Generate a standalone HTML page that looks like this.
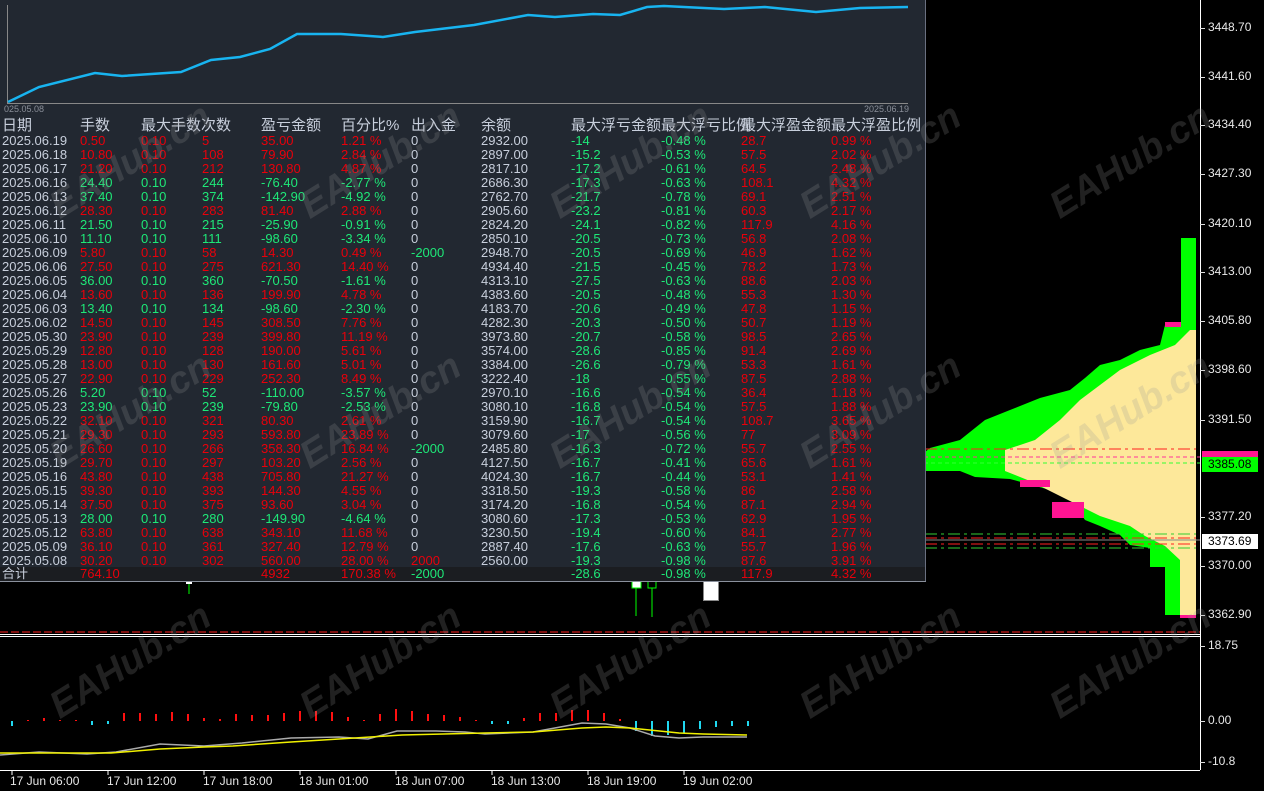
<!DOCTYPE html>
<html><head><meta charset="utf-8"><style>
*{margin:0;padding:0}
body{width:1264px;height:791px;background:#000;position:relative;overflow:hidden;font-family:"Liberation Sans","Noto Sans CJK SC",sans-serif}
.abs{position:absolute}
#panel{position:absolute;left:0;top:0;width:925px;height:581px;background:#222831;border-right:1px solid #6a7080}
.r{position:absolute;left:0;width:925px;height:14px;font-size:13px;line-height:14px}
.r span{position:absolute;top:0;white-space:nowrap}
.a{left:2px;color:#c8cfdc}.b{left:80px}.c{left:141px}.d{left:202px}.e{left:261px}.f{left:341px}.g{left:411px;color:#c8cfdc}.h{left:481px;color:#c8cfdc}.i{left:571px;color:#1ee878}.j{left:661px;color:#1ee878}.k{left:741px;color:#e8000b}.l{left:831px;color:#e8000b}
.R{color:#e8000b}.G{color:#1ee878}
.R .a,.G .a{color:#c8cfdc}
.gg{color:#1ee878!important}
#hdr{position:absolute;top:116px;left:0;font-size:15px;line-height:20px;color:#c8cfdc;width:925px;height:20px}
#hdr span{position:absolute;white-space:nowrap}
.ax{position:absolute;left:1208px;font-size:12px;color:#e8e8e8;font-family:"Liberation Sans",sans-serif}
.tk{position:absolute;left:1200px;width:5px;height:1px;background:#ddd}
.tl{position:absolute;top:774px;font-size:12px;color:#e8e8e8}
.wm{position:absolute;font:bold italic 38px "Liberation Sans",sans-serif;color:rgba(150,150,150,0.22);transform:rotate(-32deg);white-space:nowrap}
</style></head><body>

<!-- volume profile -->
<svg class="abs" style="left:0;top:0" width="1264" height="791">
<polygon fill="#00ff00" points="1181,238 1196,238 1196,615 1165,615 1165,567 1150,567 1150,548 1130,545 1120,535 1100,526 1085,520 1070,497 1050,490 1010,479 975,477 960,471 925,471 925,452 930,448 960,440 985,420 1010,410 1040,398 1070,390 1085,378 1100,365 1120,360 1140,350 1160,345 1165,325 1181,322"/>
<polygon fill="#fde89a" points="1190,330 1196,330 1196,615 1180,615 1180,560 1165,546 1145,536 1130,526 1100,516 1070,501 1050,491 1030,481 1005,471 1005,450 1035,440 1060,420 1080,400 1100,385 1120,370 1150,355 1175,345"/>
<rect x="1165" y="322" width="16" height="5" fill="#ff1493"/>
<rect x="1020" y="480" width="30" height="7" fill="#ff1493"/>
<rect x="1052" y="502" width="32" height="16" fill="#ff1493"/>
<rect x="1180" y="615" width="16" height="3" fill="#ff1493"/>
<line x1="925" y1="449" x2="1196" y2="449" stroke="#ff2020" stroke-dasharray="12,4,3,4"/>
<line x1="0" y1="457" x2="1200" y2="457" stroke="#ff3399" stroke-dasharray="4,3"/>
<line x1="0" y1="463" x2="1200" y2="463" stroke="#33ff33" stroke-dasharray="4,3"/>
<line x1="925" y1="534" x2="1196" y2="534" stroke="#33cc33" stroke-dasharray="12,4,3,4"/>
<line x1="925" y1="538" x2="1196" y2="538" stroke="#ff2020" stroke-dasharray="12,4,3,4"/>
<line x1="925" y1="540" x2="1200" y2="540" stroke="#888"/>
<line x1="925" y1="544" x2="1196" y2="544" stroke="#ff2020" stroke-dasharray="12,4,3,4"/>
<line x1="925" y1="548" x2="1196" y2="548" stroke="#33cc33" stroke-dasharray="12,4,3,4"/>
<line x1="0" y1="632" x2="1200" y2="632" stroke="#ff2020" stroke-dasharray="8,3"/>
<line x1="0" y1="634.5" x2="1200" y2="634.5" stroke="#fff"/>
<line x1="0" y1="636.5" x2="1200" y2="636.5" stroke="#fff"/>
<line x1="1200.5" y1="0" x2="1200.5" y2="770" stroke="#fff"/>
<line x1="0" y1="770.5" x2="1200" y2="770.5" stroke="#fff"/>
<!-- candles -->
<line x1="189" y1="582" x2="189" y2="594" stroke="#00ff00"/><rect x="186" y="582" width="6" height="2" fill="#fff"/>
<line x1="636" y1="588" x2="636" y2="616" stroke="#00ff00"/><rect x="632" y="581" width="9" height="7" fill="#fff" stroke="#00ff00"/>
<line x1="652" y1="588" x2="652" y2="617" stroke="#00ff00"/><rect x="648" y="581" width="8" height="7" fill="none" stroke="#00ff00"/>
<rect x="703.5" y="578.5" width="15" height="22" fill="#fff" stroke="#888"/>
<!-- indicator -->
<g stroke-width="2">
<line x1="12" y1="721" x2="12" y2="726" stroke="#20d8f0"/>
<line x1="28" y1="721" x2="28" y2="720" stroke="#ff1010"/>
<line x1="44" y1="721" x2="44" y2="718" stroke="#ff1010"/>
<line x1="60" y1="721" x2="60" y2="720" stroke="#ff1010"/>
<line x1="76" y1="721" x2="76" y2="720" stroke="#ff1010"/>
<line x1="92" y1="721" x2="92" y2="725" stroke="#20d8f0"/>
<line x1="108" y1="721" x2="108" y2="724" stroke="#20d8f0"/>
<line x1="124" y1="721" x2="124" y2="713" stroke="#ff1010"/>
<line x1="140" y1="721" x2="140" y2="713" stroke="#ff1010"/>
<line x1="156" y1="721" x2="156" y2="714" stroke="#ff1010"/>
<line x1="172" y1="721" x2="172" y2="712" stroke="#ff1010"/>
<line x1="188" y1="721" x2="188" y2="714" stroke="#ff1010"/>
<line x1="204" y1="721" x2="204" y2="718" stroke="#ff1010"/>
<line x1="220" y1="721" x2="220" y2="719" stroke="#ff1010"/>
<line x1="236" y1="721" x2="236" y2="714" stroke="#ff1010"/>
<line x1="252" y1="721" x2="252" y2="715" stroke="#ff1010"/>
<line x1="268" y1="721" x2="268" y2="715" stroke="#ff1010"/>
<line x1="284" y1="721" x2="284" y2="713" stroke="#ff1010"/>
<line x1="300" y1="721" x2="300" y2="711" stroke="#ff1010"/>
<line x1="316" y1="721" x2="316" y2="711" stroke="#ff1010"/>
<line x1="332" y1="721" x2="332" y2="712" stroke="#ff1010"/>
<line x1="348" y1="721" x2="348" y2="717" stroke="#ff1010"/>
<line x1="364" y1="721" x2="364" y2="720" stroke="#ff1010"/>
<line x1="380" y1="721" x2="380" y2="714" stroke="#ff1010"/>
<line x1="396" y1="721" x2="396" y2="709" stroke="#ff1010"/>
<line x1="412" y1="721" x2="412" y2="711" stroke="#ff1010"/>
<line x1="428" y1="721" x2="428" y2="714" stroke="#ff1010"/>
<line x1="444" y1="721" x2="444" y2="715" stroke="#ff1010"/>
<line x1="460" y1="721" x2="460" y2="717" stroke="#ff1010"/>
<line x1="476" y1="721" x2="476" y2="720" stroke="#ff1010"/>
<line x1="492" y1="721" x2="492" y2="724" stroke="#20d8f0"/>
<line x1="508" y1="721" x2="508" y2="724" stroke="#20d8f0"/>
<line x1="524" y1="721" x2="524" y2="718" stroke="#ff1010"/>
<line x1="540" y1="721" x2="540" y2="713" stroke="#ff1010"/>
<line x1="556" y1="721" x2="556" y2="713" stroke="#ff1010"/>
<line x1="572" y1="721" x2="572" y2="710" stroke="#ff1010"/>
<line x1="588" y1="721" x2="588" y2="710" stroke="#ff1010"/>
<line x1="604" y1="721" x2="604" y2="713" stroke="#ff1010"/>
<line x1="620" y1="721" x2="620" y2="719" stroke="#ff1010"/>
<line x1="636" y1="721" x2="636" y2="731" stroke="#20d8f0"/>
<line x1="652" y1="721" x2="652" y2="736" stroke="#20d8f0"/>
<line x1="668" y1="721" x2="668" y2="735" stroke="#20d8f0"/>
<line x1="684" y1="721" x2="684" y2="733" stroke="#20d8f0"/>
<line x1="700" y1="721" x2="700" y2="729" stroke="#20d8f0"/>
<line x1="716" y1="721" x2="716" y2="727" stroke="#20d8f0"/>
<line x1="732" y1="721" x2="732" y2="726" stroke="#20d8f0"/>
<line x1="748" y1="721" x2="748" y2="726" stroke="#20d8f0"/>
</g>
<polyline fill="none" stroke="#aaa" stroke-width="1.5" points="0,755 39,752 87,754 116,752 160,744 204,746 242,743 291,738 339,737 368,739 397,731 436,731 465,732 485,734 533,732 582,723 606,724 630,728 655,736 679,738 703,737 747,737"/>
<polyline fill="none" stroke="#f0f000" stroke-width="1.5" points="0,753 82,753 111,753 160,749 204,747 233,746 291,742 339,739 402,735 485,733 533,732 582,728 606,727 630,728 679,733 703,734 747,735"/>
<!-- time ticks -->
<g stroke="#fff"><line x1="12" y1="770" x2="12" y2="775"/><line x1="108" y1="770" x2="108" y2="775"/><line x1="204" y1="770" x2="204" y2="775"/><line x1="300" y1="770" x2="300" y2="775"/><line x1="396" y1="770" x2="396" y2="775"/><line x1="492" y1="770" x2="492" y2="775"/><line x1="588" y1="770" x2="588" y2="775"/><line x1="684" y1="770" x2="684" y2="775"/></g>
</svg>

<div id="panel">
<svg class="abs" style="left:0;top:0" width="925" height="116">
<line x1="7.5" y1="5" x2="7.5" y2="104" stroke="#888"/>
<line x1="7" y1="103.5" x2="908" y2="103.5" stroke="#888"/>
<polyline fill="none" stroke="#18b4f0" stroke-width="2.5" points="8,102 39,87 95,73 122,76 181,72 211,60 240,57 270,49 297,34 341,34 383,37 415,32 474,25 528,15 555,17 593,14 620,15 647,7 664,6 724,9 765,7 816,12 860,8 908,7"/>
<text x="4" y="112" font-size="9" fill="#8a8f99" font-family="Liberation Sans">025.05.08</text>
<text x="864" y="112" font-size="9" fill="#8a8f99" font-family="Liberation Sans">2025.06.19</text>
</svg>
<div id="hdr"><span style="left:2px">日期</span><span style="left:80px">手数</span><span style="left:141px">最大手数次数</span><span style="left:261px">盈亏金额</span><span style="left:341px">百分比%</span><span style="left:411px">出入金</span><span style="left:481px">余额</span><span style="left:571px">最大浮亏金额</span><span style="left:661px">最大浮亏比例</span><span style="left:741px">最大浮盈金额</span><span style="left:831px">最大浮盈比例</span></div>
<div class="r R" style="top:134px"><span class="a">2025.06.19</span><span class="b">0.50</span><span class="c">0.10</span><span class="d">5</span><span class="e">35.00</span><span class="f">1.21 %</span><span class="g">0</span><span class="h">2932.00</span><span class="i">-14</span><span class="j">-0.48 %</span><span class="k">28.7</span><span class="l">0.99 %</span></div>
<div class="r R" style="top:148px"><span class="a">2025.06.18</span><span class="b">10.80</span><span class="c">0.10</span><span class="d">108</span><span class="e">79.90</span><span class="f">2.84 %</span><span class="g">0</span><span class="h">2897.00</span><span class="i">-15.2</span><span class="j">-0.53 %</span><span class="k">57.5</span><span class="l">2.02 %</span></div>
<div class="r R" style="top:162px"><span class="a">2025.06.17</span><span class="b">21.20</span><span class="c">0.10</span><span class="d">212</span><span class="e">130.80</span><span class="f">4.87 %</span><span class="g">0</span><span class="h">2817.10</span><span class="i">-17.2</span><span class="j">-0.61 %</span><span class="k">64.5</span><span class="l">2.48 %</span></div>
<div class="r G" style="top:176px"><span class="a">2025.06.16</span><span class="b">24.40</span><span class="c">0.10</span><span class="d">244</span><span class="e">-76.40</span><span class="f">-2.77 %</span><span class="g">0</span><span class="h">2686.30</span><span class="i">-17.3</span><span class="j">-0.63 %</span><span class="k">108.1</span><span class="l">4.32 %</span></div>
<div class="r G" style="top:190px"><span class="a">2025.06.13</span><span class="b">37.40</span><span class="c">0.10</span><span class="d">374</span><span class="e">-142.90</span><span class="f">-4.92 %</span><span class="g">0</span><span class="h">2762.70</span><span class="i">-21.7</span><span class="j">-0.78 %</span><span class="k">69.1</span><span class="l">2.51 %</span></div>
<div class="r R" style="top:204px"><span class="a">2025.06.12</span><span class="b">28.30</span><span class="c">0.10</span><span class="d">283</span><span class="e">81.40</span><span class="f">2.88 %</span><span class="g">0</span><span class="h">2905.60</span><span class="i">-23.2</span><span class="j">-0.81 %</span><span class="k">60.3</span><span class="l">2.17 %</span></div>
<div class="r G" style="top:218px"><span class="a">2025.06.11</span><span class="b">21.50</span><span class="c">0.10</span><span class="d">215</span><span class="e">-25.90</span><span class="f">-0.91 %</span><span class="g">0</span><span class="h">2824.20</span><span class="i">-24.1</span><span class="j">-0.82 %</span><span class="k">117.9</span><span class="l">4.16 %</span></div>
<div class="r G" style="top:232px"><span class="a">2025.06.10</span><span class="b">11.10</span><span class="c">0.10</span><span class="d">111</span><span class="e">-98.60</span><span class="f">-3.34 %</span><span class="g">0</span><span class="h">2850.10</span><span class="i">-20.5</span><span class="j">-0.73 %</span><span class="k">56.8</span><span class="l">2.08 %</span></div>
<div class="r R" style="top:246px"><span class="a">2025.06.09</span><span class="b">5.80</span><span class="c">0.10</span><span class="d">58</span><span class="e">14.30</span><span class="f">0.49 %</span><span class="g gg">-2000</span><span class="h">2948.70</span><span class="i">-20.5</span><span class="j">-0.69 %</span><span class="k">46.9</span><span class="l">1.62 %</span></div>
<div class="r R" style="top:260px"><span class="a">2025.06.06</span><span class="b">27.50</span><span class="c">0.10</span><span class="d">275</span><span class="e">621.30</span><span class="f">14.40 %</span><span class="g">0</span><span class="h">4934.40</span><span class="i">-21.5</span><span class="j">-0.45 %</span><span class="k">78.2</span><span class="l">1.73 %</span></div>
<div class="r G" style="top:274px"><span class="a">2025.06.05</span><span class="b">36.00</span><span class="c">0.10</span><span class="d">360</span><span class="e">-70.50</span><span class="f">-1.61 %</span><span class="g">0</span><span class="h">4313.10</span><span class="i">-27.5</span><span class="j">-0.63 %</span><span class="k">88.6</span><span class="l">2.03 %</span></div>
<div class="r R" style="top:288px"><span class="a">2025.06.04</span><span class="b">13.60</span><span class="c">0.10</span><span class="d">136</span><span class="e">199.90</span><span class="f">4.78 %</span><span class="g">0</span><span class="h">4383.60</span><span class="i">-20.5</span><span class="j">-0.48 %</span><span class="k">55.3</span><span class="l">1.30 %</span></div>
<div class="r G" style="top:302px"><span class="a">2025.06.03</span><span class="b">13.40</span><span class="c">0.10</span><span class="d">134</span><span class="e">-98.60</span><span class="f">-2.30 %</span><span class="g">0</span><span class="h">4183.70</span><span class="i">-20.6</span><span class="j">-0.49 %</span><span class="k">47.8</span><span class="l">1.15 %</span></div>
<div class="r R" style="top:316px"><span class="a">2025.06.02</span><span class="b">14.50</span><span class="c">0.10</span><span class="d">145</span><span class="e">308.50</span><span class="f">7.76 %</span><span class="g">0</span><span class="h">4282.30</span><span class="i">-20.3</span><span class="j">-0.50 %</span><span class="k">50.7</span><span class="l">1.19 %</span></div>
<div class="r R" style="top:330px"><span class="a">2025.05.30</span><span class="b">23.90</span><span class="c">0.10</span><span class="d">239</span><span class="e">399.80</span><span class="f">11.19 %</span><span class="g">0</span><span class="h">3973.80</span><span class="i">-20.7</span><span class="j">-0.58 %</span><span class="k">98.5</span><span class="l">2.65 %</span></div>
<div class="r R" style="top:344px"><span class="a">2025.05.29</span><span class="b">12.80</span><span class="c">0.10</span><span class="d">128</span><span class="e">190.00</span><span class="f">5.61 %</span><span class="g">0</span><span class="h">3574.00</span><span class="i">-28.6</span><span class="j">-0.85 %</span><span class="k">91.4</span><span class="l">2.69 %</span></div>
<div class="r R" style="top:358px"><span class="a">2025.05.28</span><span class="b">13.00</span><span class="c">0.10</span><span class="d">130</span><span class="e">161.60</span><span class="f">5.01 %</span><span class="g">0</span><span class="h">3384.00</span><span class="i">-26.6</span><span class="j">-0.79 %</span><span class="k">53.3</span><span class="l">1.61 %</span></div>
<div class="r R" style="top:372px"><span class="a">2025.05.27</span><span class="b">22.90</span><span class="c">0.10</span><span class="d">229</span><span class="e">252.30</span><span class="f">8.49 %</span><span class="g">0</span><span class="h">3222.40</span><span class="i">-18</span><span class="j">-0.55 %</span><span class="k">87.5</span><span class="l">2.88 %</span></div>
<div class="r G" style="top:386px"><span class="a">2025.05.26</span><span class="b">5.20</span><span class="c">0.10</span><span class="d">52</span><span class="e">-110.00</span><span class="f">-3.57 %</span><span class="g">0</span><span class="h">2970.10</span><span class="i">-16.6</span><span class="j">-0.54 %</span><span class="k">36.4</span><span class="l">1.18 %</span></div>
<div class="r G" style="top:400px"><span class="a">2025.05.23</span><span class="b">23.90</span><span class="c">0.10</span><span class="d">239</span><span class="e">-79.80</span><span class="f">-2.53 %</span><span class="g">0</span><span class="h">3080.10</span><span class="i">-16.8</span><span class="j">-0.54 %</span><span class="k">57.5</span><span class="l">1.88 %</span></div>
<div class="r R" style="top:414px"><span class="a">2025.05.22</span><span class="b">32.10</span><span class="c">0.10</span><span class="d">321</span><span class="e">80.30</span><span class="f">2.61 %</span><span class="g">0</span><span class="h">3159.90</span><span class="i">-16.7</span><span class="j">-0.54 %</span><span class="k">108.7</span><span class="l">3.65 %</span></div>
<div class="r R" style="top:428px"><span class="a">2025.05.21</span><span class="b">29.30</span><span class="c">0.10</span><span class="d">293</span><span class="e">593.80</span><span class="f">23.89 %</span><span class="g">0</span><span class="h">3079.60</span><span class="i">-17</span><span class="j">-0.56 %</span><span class="k">77</span><span class="l">3.09 %</span></div>
<div class="r R" style="top:442px"><span class="a">2025.05.20</span><span class="b">26.60</span><span class="c">0.10</span><span class="d">266</span><span class="e">358.30</span><span class="f">16.84 %</span><span class="g gg">-2000</span><span class="h">2485.80</span><span class="i">-16.3</span><span class="j">-0.72 %</span><span class="k">55.7</span><span class="l">2.55 %</span></div>
<div class="r R" style="top:456px"><span class="a">2025.05.19</span><span class="b">29.70</span><span class="c">0.10</span><span class="d">297</span><span class="e">103.20</span><span class="f">2.56 %</span><span class="g">0</span><span class="h">4127.50</span><span class="i">-16.7</span><span class="j">-0.41 %</span><span class="k">65.6</span><span class="l">1.61 %</span></div>
<div class="r R" style="top:470px"><span class="a">2025.05.16</span><span class="b">43.80</span><span class="c">0.10</span><span class="d">438</span><span class="e">705.80</span><span class="f">21.27 %</span><span class="g">0</span><span class="h">4024.30</span><span class="i">-16.7</span><span class="j">-0.44 %</span><span class="k">53.1</span><span class="l">1.41 %</span></div>
<div class="r R" style="top:484px"><span class="a">2025.05.15</span><span class="b">39.30</span><span class="c">0.10</span><span class="d">393</span><span class="e">144.30</span><span class="f">4.55 %</span><span class="g">0</span><span class="h">3318.50</span><span class="i">-19.3</span><span class="j">-0.58 %</span><span class="k">86</span><span class="l">2.58 %</span></div>
<div class="r R" style="top:498px"><span class="a">2025.05.14</span><span class="b">37.50</span><span class="c">0.10</span><span class="d">375</span><span class="e">93.60</span><span class="f">3.04 %</span><span class="g">0</span><span class="h">3174.20</span><span class="i">-16.8</span><span class="j">-0.54 %</span><span class="k">87.1</span><span class="l">2.94 %</span></div>
<div class="r G" style="top:512px"><span class="a">2025.05.13</span><span class="b">28.00</span><span class="c">0.10</span><span class="d">280</span><span class="e">-149.90</span><span class="f">-4.64 %</span><span class="g">0</span><span class="h">3080.60</span><span class="i">-17.3</span><span class="j">-0.53 %</span><span class="k">62.9</span><span class="l">1.95 %</span></div>
<div class="r R" style="top:526px"><span class="a">2025.05.12</span><span class="b">63.80</span><span class="c">0.10</span><span class="d">638</span><span class="e">343.10</span><span class="f">11.68 %</span><span class="g">0</span><span class="h">3230.50</span><span class="i">-19.4</span><span class="j">-0.60 %</span><span class="k">84.1</span><span class="l">2.77 %</span></div>
<div class="r R" style="top:540px"><span class="a">2025.05.09</span><span class="b">36.10</span><span class="c">0.10</span><span class="d">361</span><span class="e">327.40</span><span class="f">12.79 %</span><span class="g">0</span><span class="h">2887.40</span><span class="i">-17.6</span><span class="j">-0.63 %</span><span class="k">55.7</span><span class="l">1.96 %</span></div>
<div class="r R" style="top:554px"><span class="a">2025.05.08</span><span class="b">30.20</span><span class="c">0.10</span><span class="d">302</span><span class="e">560.00</span><span class="f">28.00 %</span><span class="g" style="color:#e8000b">2000</span><span class="h">2560.00</span><span class="i">-19.3</span><span class="j">-0.98 %</span><span class="k">87.6</span><span class="l">3.91 %</span></div>
<div class="r R" style="top:567px;height:14px;background:#1b1d21"><span class="a">合计</span><span class="b">764.10</span><span class="e">4932</span><span class="f">170.38 %</span><span class="g gg">-2000</span><span class="i">-28.6</span><span class="j">-0.98 %</span><span class="k">117.9</span><span class="l">4.32 %</span></div>
</div>
<div class="abs" style="left:0;top:581px;width:926px;height:1px;background:#8a909c"></div>

<!-- price axis -->
<div class="tk" style="top:28px"></div><div class="ax" style="top:20px">3448.70</div>
<div class="tk" style="top:77px"></div><div class="ax" style="top:69px">3441.60</div>
<div class="tk" style="top:125px"></div><div class="ax" style="top:117px">3434.40</div>
<div class="tk" style="top:174px"></div><div class="ax" style="top:166px">3427.30</div>
<div class="tk" style="top:224px"></div><div class="ax" style="top:216px">3420.10</div>
<div class="tk" style="top:272px"></div><div class="ax" style="top:264px">3413.00</div>
<div class="tk" style="top:321px"></div><div class="ax" style="top:313px">3405.80</div>
<div class="tk" style="top:370px"></div><div class="ax" style="top:362px">3398.60</div>
<div class="tk" style="top:420px"></div><div class="ax" style="top:412px">3391.50</div>
<div class="tk" style="top:517px"></div><div class="ax" style="top:509px">3377.20</div>
<div class="tk" style="top:566px"></div><div class="ax" style="top:558px">3370.00</div>
<div class="tk" style="top:615px"></div><div class="ax" style="top:607px">3362.90</div>
<div class="abs" style="left:1202px;top:451px;width:56px;height:8px;background:#ff1493"></div>
<div class="abs" style="left:1202px;top:457px;width:56px;height:15px;background:#00ff00;color:#000;font-size:12px;line-height:15px;padding-left:6px;box-sizing:border-box">3385.08</div>
<div class="abs" style="left:1202px;top:534px;width:56px;height:15px;background:#fff;color:#000;font-size:12px;line-height:15px;padding-left:6px;box-sizing:border-box">3373.69</div>
<div class="tk" style="top:646px"></div><div class="ax" style="top:638px">18.75</div>
<div class="tk" style="top:721px"></div><div class="ax" style="top:713px">0.00</div>
<div class="tk" style="top:762px"></div><div class="ax" style="top:754px">-10.8</div>

<div class="tl" style="left:10px">17 Jun 06:00</div>
<div class="tl" style="left:107px">17 Jun 12:00</div>
<div class="tl" style="left:203px">17 Jun 18:00</div>
<div class="tl" style="left:299px">18 Jun 01:00</div>
<div class="tl" style="left:395px">18 Jun 07:00</div>
<div class="tl" style="left:491px">18 Jun 13:00</div>
<div class="tl" style="left:587px">18 Jun 19:00</div>
<div class="tl" style="left:683px">19 Jun 02:00</div>

<!-- watermarks -->
<div class="wm" style="left:40px;top:640px">EAHub.cn</div>
<div class="wm" style="left:290px;top:640px">EAHub.cn</div>
<div class="wm" style="left:540px;top:640px">EAHub.cn</div>
<div class="wm" style="left:790px;top:640px">EAHub.cn</div>
<div class="wm" style="left:1040px;top:640px">EAHub.cn</div>
<div class="wm" style="left:40px;top:390px">EAHub.cn</div>
<div class="wm" style="left:290px;top:390px">EAHub.cn</div>
<div class="wm" style="left:540px;top:390px">EAHub.cn</div>
<div class="wm" style="left:790px;top:390px">EAHub.cn</div>
<div class="wm" style="left:1040px;top:390px">EAHub.cn</div>
<div class="wm" style="left:40px;top:140px">EAHub.cn</div>
<div class="wm" style="left:290px;top:140px">EAHub.cn</div>
<div class="wm" style="left:540px;top:140px">EAHub.cn</div>
<div class="wm" style="left:790px;top:140px">EAHub.cn</div>
<div class="wm" style="left:1040px;top:140px">EAHub.cn</div>
</body></html>
